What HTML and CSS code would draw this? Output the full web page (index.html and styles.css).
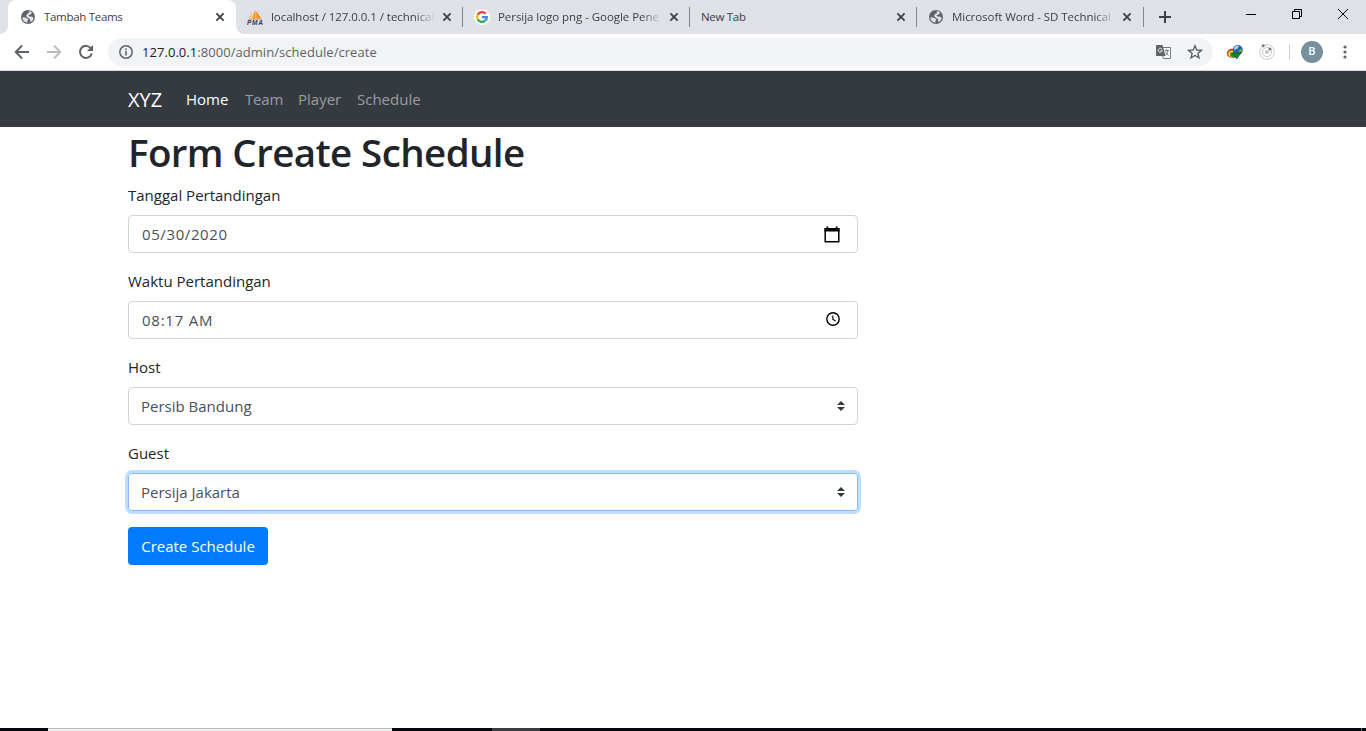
FILE: index.html
```html
<!DOCTYPE html>
<html lang="id">
<head>
<meta charset="utf-8">
<title>Tambah Teams</title>
<link rel="stylesheet" href="styles.css">
</head>
<body>
<svg class="defs" aria-hidden="true">
  <symbol id="globe" viewBox="0 0 16 16"><circle cx="8" cy="8" r="7" fill="#5f6368"/><path d="M2.500 8.500C4 8 5.500 8.500 6.300 9.300L8.500 10 7.500 11.500V13.500C4.500 13.500 2.300 11.300 2.500 8.500ZM8.500 2.300C10 2.300 11 2.600 12 3.600L10.800 5.500 8.500 6.300 9.300 7.500H11.500L13.600 8.500C13.500 10.500 12.500 12.300 10.800 13L10 11.500V10L8 9 6 7 7.300 4.800 9 4Z" fill="#dee1e6"/></symbol>
  <symbol id="close" viewBox="0 0 10 10"><path d="M1.400 1.400 8.600 8.600M8.600 1.400 1.400 8.600" fill="none" stroke="#3c4043" stroke-width="1.800"/></symbol>
</svg>
<div class="window">
  <header class="tabs">
    <div class="tab tab-active">
      <svg class="favicon"><use href="#globe"/></svg>
      <span class="tab-title short">Tambah Teams</span>
      <svg class="close"><use href="#close"/></svg>
    </div>
    <div class="tab">
      <svg class="favicon" viewBox="0 0 16 16"><path d="M1.500 10.500 4.500 2.500 4.800 10Z" fill="#fbc281"/><path d="M5.300 10.500C5.500 6 7 3 8.600 1V10Z" fill="#f89c2f"/><path d="M9.300 9.800V1.500C10.500 4 12.500 6 14.500 10.500Z" fill="#f6901e"/><path d="M1 10.800 15 10" stroke="#d9b68c" fill="none"/><text x="0" y="16" class="pma" textLength="16">PMA</text></svg>
      <span class="tab-title fade">localhost / 127.0.0.1 / technical</span>
      <svg class="close"><use href="#close"/></svg>
    </div>
    <div class="tab sep">
      <svg class="favicon" viewBox="0 0 16 16"><circle cx="8" cy="8" r="8" fill="#fff"/><g fill="none" stroke-width="2.300"><path d="M11.600 4.600A4.900 4.900 0 0 0 3.700 5.700" stroke="#ea4335"/><path d="M3.700 5.700A4.900 4.900 0 0 0 3.700 10.300" stroke="#fbbc05"/><path d="M3.700 10.300A4.900 4.900 0 0 0 11.300 11.600" stroke="#34a853"/><path d="M11.300 11.600A4.900 4.900 0 0 0 12.800 8.200H8" stroke="#4285f4"/></g></svg>
      <span class="tab-title fade">Persija logo png - Google Pene</span>
      <svg class="close"><use href="#close"/></svg>
    </div>
    <div class="tab sep">
      <span class="tab-title short">New Tab</span>
      <svg class="close"><use href="#close"/></svg>
    </div>
    <div class="tab sep last">
      <svg class="favicon"><use href="#globe"/></svg>
      <span class="tab-title fade">Microsoft Word - SD Technical</span>
      <svg class="close"><use href="#close"/></svg>
    </div>
    <div class="new-tab sep"><svg width="12" height="12" viewBox="0 0 12 12"><path d="M6 0V12M0 6H12" stroke="#3c4043" stroke-width="2"/></svg></div>
    <div class="controls">
      <svg width="10" height="10" viewBox="0 0 10 10"><path d="M0 5.500H10" stroke="#000"/></svg>
      <svg width="10" height="10" viewBox="0 0 10 10"><path d="M.5 2.500H7.500V9.500H.5ZM2.500 2.500V.5H9.500V7.500H7.500" stroke="#000" fill="none"/></svg>
      <svg width="10" height="10" viewBox="0 0 10 10"><path d="M0 0 10 10M10 0 0 10" stroke="#000"/></svg>
    </div>
  </header>
  <div class="toolbar">
    <svg class="nav-icon" viewBox="0 0 16 16"><path d="M15 8H2M8 1.500 1.800 8 8 14.500" fill="none" stroke="#5f6368" stroke-width="2"/></svg>
    <svg class="nav-icon" viewBox="0 0 16 16"><path d="M1 8H14M8 1.500 14.200 8 8 14.500" fill="none" stroke="#babcbe" stroke-width="2"/></svg>
    <svg class="nav-icon" viewBox="0 0 16 16"><path d="M13 4.500A6 6 0 1 0 13.800 9.500" fill="none" stroke="#5f6368" stroke-width="2"/><path d="M15 1V7H9Z" fill="#5f6368"/></svg>
    <div class="omnibox">
      <svg class="info" viewBox="0 0 14 14"><circle cx="7" cy="7" r="6.200" fill="none" stroke="#5f6368" stroke-width="1.500"/><path d="M7 6V10.500M7 3.500V5" stroke="#5f6368" stroke-width="1.600"/></svg>
      <span class="url"><b>127.0.0.1</b>:8000/admin/schedule/create</span>
      <svg class="translate" viewBox="0 0 15 15"><path d="M6 3.500H14.500V14.500H7.500L6 10Z" fill="#fff" stroke="#777a7e"/><path d="M1 1H6.500L9.500 12H1A1 1 0 0 1 0 11V2A1 1 0 0 1 1 1Z" fill="#5f6368"/><path d="M6 5.300A2 2 0 1 0 6.200 6.700H4.500" fill="none" stroke="#f1f3f4"/><path d="M8.500 6.500H13M10.500 5.300V6.500M12 6.500C11.500 9 10.500 10.500 9.500 11.300M9.500 8 12.500 11.500" fill="none" stroke="#777a7e"/></svg>
      <svg class="star" viewBox="0 0 16 16"><path d="M8 1.800 9.800 6 14.400 6.400 10.900 9.400 12 13.900 8 11.500 4 13.900 5.100 9.400 1.600 6.400 6.200 6Z" fill="none" stroke="#5f6368" stroke-width="1.400"/></svg>
    </div>
    <svg class="idm" viewBox="0 0 16 16"><path d="M0 9.500C0 6 3 4 8 5L10 12 7 14C3 14 0 13 0 9.500Z" fill="#d2301f"/><path d="M1.300 9.500C1.500 6.800 4 6 8 7L9 12 6 13.500C3 13.500 1 12 1.300 9.500Z" fill="#f4d52b"/><path d="M3 10C3.500 8 5 8 8 9V13L5 13C3.500 12.500 3 12 3 10Z" fill="#22943c"/><circle cx="10.800" cy="6" r="5" fill="#2765a9"/><path d="M7 4.500C7.500 2 10 .8 12 2L10.500 4.500 7.500 6Z" fill="#a8d5ef"/><path d="M12 6 14.800 4.500 15.500 7 13 9 11.500 8Z" fill="#68a653"/><path d="M5 9.300 14 8.800 9.800 15Z" fill="#16832e" stroke="#0b491b" stroke-width=".6"/></svg>
    <svg class="orbit" viewBox="0 0 16 16"><g fill="none" stroke="#c8c8c8"><circle cx="8" cy="8" r="7.300"/><circle cx="8" cy="8" r="4.500"/></g><circle cx="8" cy="8" r="2" fill="#c4c4c4"/><circle cx="4.200" cy="1.800" r="1.500" fill="#777"/><circle cx="11" cy="5" r="1.500" fill="#777"/></svg>
    <i class="divider"></i>
    <span class="avatar">B</span>
    <svg class="menu" viewBox="0 0 4 14"><g fill="#5f6368"><circle cx="2" cy="2" r="1.600"/><circle cx="2" cy="7" r="1.600"/><circle cx="2" cy="12" r="1.600"/></g></svg>
  </div>
  <nav class="navbar">
    <a class="brand">XYZ</a>
    <a class="link l-home">Home</a>
    <a class="link l-team">Team</a>
    <a class="link l-player">Player</a>
    <a class="link l-schedule">Schedule</a>
  </nav>
  <main class="page">
    <h1>Form Create Schedule</h1>
    <form class="form">
      <div class="group">
        <label>Tanggal Pertandingan</label>
        <div class="control"><span class="date">05/30/2020</span>
          <svg class="calendar" viewBox="0 0 16 18"><path d="M1.200 3H14.800V15.800H1.200Z" fill="none" stroke="#000" stroke-width="1.500"/><path d="M.5 2H15.500V5.500H.5ZM2.500 .5H4.200V3H2.500ZM11.800 .5H13.500V3H11.800Z"/></svg></div>
      </div>
      <div class="group">
        <label>Waktu Pertandingan</label>
        <div class="control"><span class="time">08:17 AM</span>
          <svg class="clock" viewBox="0 0 14 14"><circle cx="7" cy="7" r="6.200" fill="none" stroke="#000" stroke-width="1.400"/><path d="M6.800 3.500V7.300L9.600 9" fill="none" stroke="#000" stroke-width="1.100"/></svg></div>
      </div>
      <div class="group">
        <label>Host</label>
        <div class="control select"><span>Persib Bandung</span>
          <svg class="arrows" viewBox="0 0 4 5"><path fill="#343a40" d="M2 0 0 2h4zm0 5L0 3h4z"/></svg></div>
      </div>
      <div class="group">
        <label>Guest</label>
        <div class="control select focus"><span>Persija Jakarta</span>
          <svg class="arrows" viewBox="0 0 4 5"><path fill="#343a40" d="M2 0 0 2h4zm0 5L0 3h4z"/></svg></div>
      </div>
      <button type="button" class="btn">Create Schedule</button>
    </form>
  </main>
  <footer class="taskbar"><i class="search"></i><i class="active-app"></i><i class="peek"></i></footer>
</div>
</body>
</html>
```
FILE: styles.css
```css
* { box-sizing: border-box; }
body { margin: 0; background: #fff; color: #212529; font: 15px/24px "Open Sans", "Noto Sans", sans-serif; overflow: hidden; }
svg { display: block; flex: none; }
.defs { position: absolute; width: 0; height: 0; }
.window { height: 731px; display: flex; flex-direction: column; }

.tabs { height: 34px; flex: none; display: flex; background: #dee1e6; padding-left: 8px; }
.tab { width: 227px; height: 34px; display: flex; align-items: center; padding: 0 11px; position: relative; }
.tab-active { width: 228px; padding-left: 12px; background: #fff; border-radius: 8px 8px 0 0; }
.tab-active::before, .tab-active::after { content: ""; position: absolute; bottom: 0; width: 8px; height: 8px; }
.tab-active::before { left: -8px; background: radial-gradient(circle at 0 0, transparent 7.500px, #fff 8px); }
.tab-active::after { right: -8px; background: radial-gradient(circle at 100% 0, transparent 7.500px, #fff 8px); }
.last { padding-right: 12px; }
.sep::before { content: ""; position: absolute; left: -1px; top: 7px; width: 1px; height: 20px; background: #80868b; }
.favicon { width: 16px; height: 16px; margin-right: 8px; }
.pma { font: italic bold 6.500px "Liberation Sans", sans-serif; fill: #343464; }
.tab-title { font-size: 11.500px; line-height: 16px; letter-spacing: -.05px; color: #3c4043; white-space: nowrap; flex: 1; min-width: 0; }
.short { letter-spacing: -.3px; }
.fade { margin-right: 7px; -webkit-mask-image: linear-gradient(90deg, #000 calc(100% - 20px), transparent); mask-image: linear-gradient(90deg, #000 calc(100% - 20px), transparent); }
.close { width: 10px; height: 10px; }
.new-tab { position: relative; width: 46px; padding: 11px 0 0 15px; }
.controls { margin-left: auto; display: flex; gap: 36px; padding: 9px 18px 0 0; }

.toolbar { height: 37px; flex: none; display: flex; align-items: center; padding: 0 20px 1px 14px; border-bottom: 1px solid #dadce0; }
.nav-icon { width: 16px; height: 16px; margin-right: 16px; }
.omnibox { width: 1105px; flex: none; height: 28px; margin-left: -2px; border-radius: 14px; background: #f1f3f4; display: flex; align-items: center; padding: 0 10px 0 11px; }
.info { width: 14px; height: 14px; margin-right: 9px; }
.url { color: #5f6368; font-size: 13px; letter-spacing: .05px; white-space: nowrap; }
.url b { color: #202124; font-weight: 400; }
.translate { width: 15px; height: 15px; margin-left: auto; margin-right: 16px; }
.star { width: 16px; height: 16px; }
.idm { width: 16px; height: 16px; margin-left: 14px; }
.orbit { width: 16px; height: 16px; margin-left: 16px; }
.divider { width: 1px; height: 16px; flex: none; background: #d0d2d5; margin-left: 14px; }
.avatar { width: 22px; height: 22px; flex: none; border-radius: 50%; background: #78909c; color: #fff; font: 500 11px/22px Roboto, sans-serif; text-align: center; margin-left: 11px; }
.menu { width: 4px; height: 14px; margin-left: 20px; }

.navbar { height: 56px; flex: none; background: #343a40; display: flex; align-items: center; padding: 0 0 0 128px; color: #9a9da0; white-space: nowrap; }
.brand { width: 58px; color: #fff; font-size: 20px; line-height: 30px; letter-spacing: 0; padding-top: 2px; }
.l-home { width: 59px; color: #fff; }
.l-team { width: 53px; letter-spacing: -.2px; }
.l-player { width: 59px; }

.page { flex: 1; padding-left: 128px; }
h1 { margin: 0 0 8px; font-size: 38.500px; line-height: 50px; height: 48px; font-weight: 600; letter-spacing: -.6px; white-space: nowrap; }
.form { width: 730px; }
.group { margin-bottom: 16px; }
label { display: block; height: 24px; margin-bottom: 8px; line-height: 25px; }
.control { height: 38px; border: 1px solid #ced4da; border-radius: 4px; padding: 0 17px 0 13px; display: flex; align-items: center; justify-content: space-between; color: #495057; }
.control span { margin-top: -1px; }
.date { letter-spacing: .6px; }
.time { letter-spacing: .75px; }
.select { padding: 0 12px; }
.focus { border-color: #80bdff; box-shadow: 0 0 0 3px #bfdeff; }
.calendar { width: 16px; height: 18px; margin-top: 2px; }
.clock { width: 14px; height: 14px; margin-top: -2px; }
.arrows { width: 8px; height: 10px; }
.btn { display: block; width: 140px; height: 38px; padding: 0 0 1px; border: 0; border-radius: 4px; background: #007bff; color: #fff; font: inherit; white-space: nowrap; }

.taskbar { height: 3px; flex: none; background: #06070d; display: flex; }
.search { width: 344px; margin-left: 48px; background: #f2f2f2; border-top: 1px solid #bbb; }
.active-app { width: 48px; margin-left: 100px; background: #3b3c40; }
.peek { width: 1px; margin-left: auto; margin-right: 4px; background: #66676b; }
```
